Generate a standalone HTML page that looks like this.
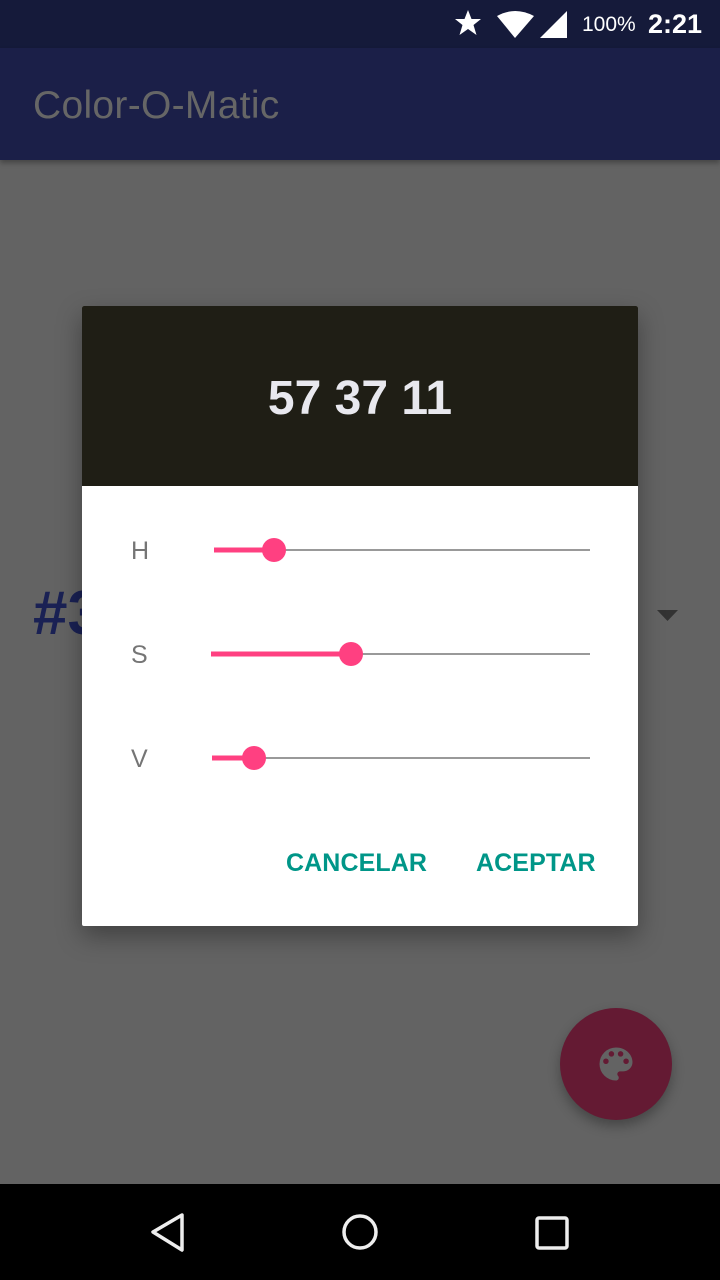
<!DOCTYPE html>
<html><head><style>
body{margin:0;width:720px;height:1280px;position:relative;background:#636363;font-family:"Liberation Sans",sans-serif;overflow:hidden}
.a{position:absolute}
.lbl{position:absolute;left:131px;font-size:25px;color:#757575}
.btn{position:absolute;top:849px;font-size:25px;font-weight:bold;color:#009688;letter-spacing:0.1px}
</style></head><body>
<div class="a" style="left:0;top:0;width:720px;height:48px;background:#151a3a"></div>
<div class="a" style="left:0;top:48px;width:720px;height:112px;background:#1b1f48;box-shadow:0 3px 5px rgba(0,0,0,.3)"></div>
<div class="a" style="left:33px;top:84px;font-size:39px;color:#666;letter-spacing:0.3px">Color-O-Matic</div>
<svg class="a" style="left:452px;top:8px" width="120" height="32">
<polygon points="16,2 19.5,11 29,11 21.5,17 24.5,27 16,21 7.5,27 10.5,17 3,11 12.5,11" fill="#fff"/>
<path d="M45 8 Q63 -2 82 8 L63 30 Z" fill="#fff"/>
<polygon points="115,3 115,30 88,30" fill="#fff"/>
</svg>
<div class="a" style="left:582px;top:13px;font-size:21px;color:#fff">100%</div>
<div class="a" style="left:648px;top:9px;font-size:27px;font-weight:bold;color:#fff">2:21</div>
<div class="a" style="left:33px;top:578px;font-size:62px;font-weight:bold;color:#1a2154">#3</div>
<svg class="a" style="left:657px;top:608px" width="22" height="14"><polygon points="0,2 21,2 10.5,13" fill="#333"/></svg>
<div class="a" style="left:82px;top:306px;width:556px;height:620px;background:#fff;border-radius:2px;box-shadow:0 10px 25px rgba(0,0,0,.35)"></div>
<div class="a" style="left:82px;top:306px;width:556px;height:180px;background:#1f1e15;border-radius:2px 2px 0 0"></div>
<div class="a" style="left:82px;top:371px;width:556px;text-align:center;font-size:48px;font-weight:bold;color:#e8e8ee">57 37 11</div>
<div class="lbl" style="top:537px">H</div>
<div class="lbl" style="top:641px">S</div>
<div class="lbl" style="top:745px">V</div>
<svg class="a" style="left:0;top:0" width="720" height="1280">
<line x1="214" y1="550" x2="590" y2="550" stroke="#999" stroke-width="2"/>
<line x1="214" y1="550" x2="274" y2="550" stroke="#ff4081" stroke-width="5"/>
<circle cx="274" cy="550" r="12" fill="#ff4081"/>
<line x1="211" y1="654" x2="590" y2="654" stroke="#999" stroke-width="2"/>
<line x1="211" y1="654" x2="351" y2="654" stroke="#ff4081" stroke-width="5"/>
<circle cx="351" cy="654" r="12" fill="#ff4081"/>
<line x1="212" y1="758" x2="590" y2="758" stroke="#999" stroke-width="2"/>
<line x1="212" y1="758" x2="254" y2="758" stroke="#ff4081" stroke-width="5"/>
<circle cx="254" cy="758" r="12" fill="#ff4081"/>
</svg>
<div class="btn" style="left:286px">CANCELAR</div>
<div class="btn" style="left:476px">ACEPTAR</div>
<div class="a" style="left:560px;top:1008px;width:112px;height:112px;border-radius:50%;background:#641a33;box-shadow:0 6px 12px rgba(0,0,0,.3)"></div>
<svg class="a" style="left:594px;top:1042px" width="44" height="44" viewBox="0 0 24 24"><path d="M12 3a9 9 0 0 0 0 18c.83 0 1.5-.67 1.5-1.5 0-.39-.15-.74-.39-1.01-.23-.26-.38-.61-.38-.99 0-.83.67-1.5 1.5-1.5H16c2.76 0 5-2.24 5-5 0-4.420-4.03-8-9-8zm-5.5 9a1.5 1.5 0 1 1 0-3 1.5 1.5 0 0 1 0 3zm3-4a1.5 1.5 0 1 1 0-3 1.5 1.5 0 0 1 0 3zm5 0a1.5 1.5 0 1 1 0-3 1.5 1.5 0 0 1 0 3zm3 4a1.5 1.5 0 1 1 0-3 1.5 1.5 0 0 1 0 3z" fill="#636363"/></svg>
<div class="a" style="left:0;top:1184px;width:720px;height:96px;background:#000"></div>
<svg class="a" style="left:0;top:1184px" width="720" height="96">
<path d="M182 31 L153 48 L182 66 Z" fill="none" stroke="#eee" stroke-width="3.5" stroke-linejoin="round"/>
<circle cx="360" cy="48" r="16" fill="none" stroke="#eee" stroke-width="3.5"/>
<rect x="537" y="34" width="30" height="30" rx="2" fill="none" stroke="#eee" stroke-width="3.5"/>
</svg>
</body></html>
